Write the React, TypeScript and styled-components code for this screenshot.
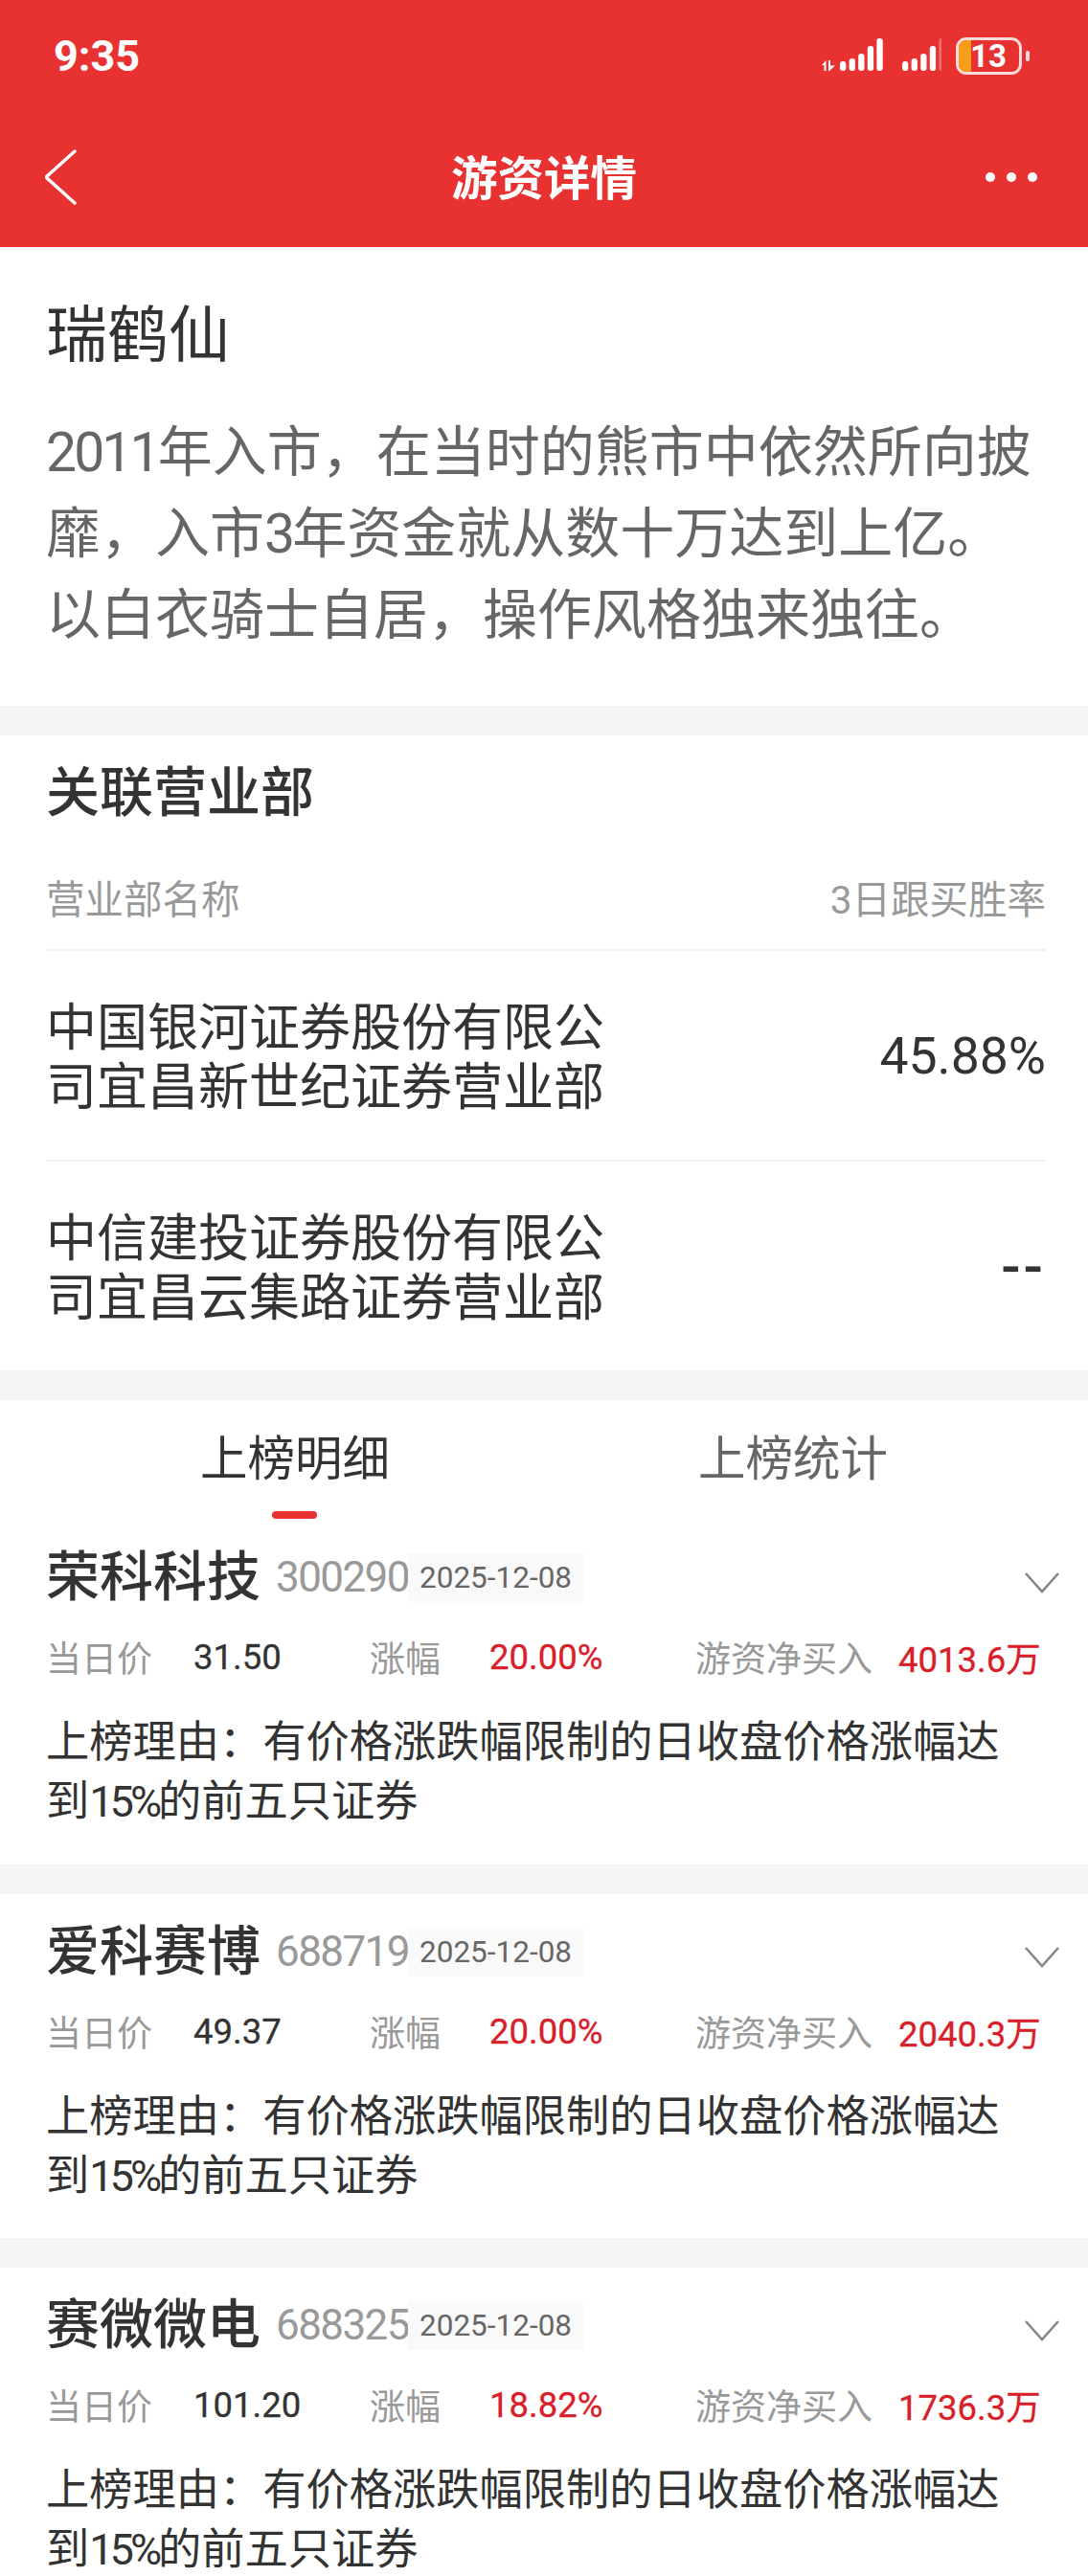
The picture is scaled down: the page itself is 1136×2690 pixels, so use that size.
import React from "react";
import styled, { createGlobalStyle } from "styled-components";

const GlobalStyle = createGlobalStyle`
  html, body {
    margin: 0;
    padding: 0;
    background: #f5f5f5;
    font-family: "Roboto", "Noto Sans CJK SC", sans-serif;
  }
  * {
    box-sizing: border-box;
  }
`;

const Page = styled.div`
  width: 1136px;
  height: 2690px;
  overflow: hidden;
  background: #f5f5f5;
  color: #333;
`;

const Header = styled.header`
  height: 258px;
  background: #e83232;
  color: #fff;
`;

const StatusBar = styled.div`
  height: 122px;
  padding: 34px 61px 0 56px;
  display: flex;
  justify-content: space-between;
  align-items: flex-start;
`;

const Clock = styled.span`
  font-size: 45px;
  line-height: 50px;
  font-weight: 700;
`;

const StatusIcons = styled.div`
  display: flex;
  align-items: center;
  height: 48px;
`;

const Battery = styled.div`
  position: relative;
  width: 69px;
  height: 39px;
  margin-left: 15px;
  border: 3px solid #fbdcdc;
  border-radius: 11px;
  overflow: hidden;
  display: flex;
  align-items: center;
  justify-content: flex-end;
  padding-right: 13px;
  font-size: 33px;
  font-weight: 700;
  line-height: 1;
  &::before {
    content: "";
    position: absolute;
    left: 0;
    top: 0;
    bottom: 0;
    width: 13px;
    background: #f89c1c;
  }
`;

const BatteryCap = styled.i`
  width: 4px;
  height: 11px;
  margin-left: 4px;
  background: #fbdcdc;
  border-radius: 2px;
`;

const NavBar = styled.nav`
  height: 136px;
  padding: 0 50px;
  display: grid;
  grid-template-columns: 1fr auto 1fr;
  align-items: start;
`;

const NavTitle = styled.h1`
  margin: 34px 0 0;
  font-size: 48.5px;
  line-height: 64px;
  font-weight: 700;
`;

const BackIcon = styled.svg`
  width: 33px;
  height: 58px;
  margin: 34px 0 0 -3px;
`;

const MoreIcon = styled.svg`
  justify-self: end;
  width: 54px;
  height: 12px;
  margin: 57px 3px 0 0;
`;

const Section = styled.section<{ $gap?: number }>`
  background: #fff;
  margin-bottom: ${(p) => p.$gap ?? 31}px;
`;

const Intro = styled(Section)`
  height: 479px;
  padding: 50px 48px 0;
`;

const PersonName = styled.h2`
  margin: 0 0 36px;
  font-size: 64px;
  line-height: 86px;
  font-weight: 400;
`;

const PersonBio = styled.p`
  margin: 0;
  font-size: 57px;
  line-height: 85px;
  color: #666;
  white-space: nowrap;
`;

// latin digits sit tighter than the CJK text around them
const Digits = styled.span<{ $tight: number }>`
  letter-spacing: ${(p) => p.$tight}em;
`;

const Branches = styled(Section)`
  height: 663px;
  padding: 22px 44px 0 48px;
`;

const SectionTitle = styled.h2`
  margin: 0;
  font-size: 56px;
  line-height: 76px;
  font-weight: 500;
`;

const BranchHead = styled.div`
  height: 127px;
  padding-top: 46px;
  display: flex;
  justify-content: space-between;
  font-size: 40.5px;
  line-height: 56px;
  color: #999;
  border-bottom: 2px solid #f0f0f0;
`;

const BranchRow = styled.div<{ $last?: boolean }>`
  height: ${(p) => (p.$last ? 218 : 220)}px;
  display: flex;
  justify-content: space-between;
  align-items: center;
  border-bottom: ${(p) => (p.$last ? "none" : "2px solid #f0f0f0")};
`;

const BranchName = styled.div`
  padding-top: 6px;
  font-size: 53px;
  line-height: 62px;
  white-space: pre-line;
`;

const WinRate = styled.div<{ $empty?: boolean }>`
  font-size: ${(p) => (p.$empty ? 60 : 53.5)}px;
  font-weight: ${(p) => (p.$empty ? 500 : 400)};
  letter-spacing: ${(p) => (p.$empty ? 3 : 0)}px;
`;

const Tabs = styled.div`
  display: flex;
  height: 159px;
  padding: 0 48px;
`;

const Tab = styled.div<{ $active?: boolean }>`
  position: relative;
  flex: 1;
  text-align: center;
  padding-top: 28px;
  font-size: 49.5px;
  line-height: 68px;
  color: ${(p) => (p.$active ? "#333" : "#666")};
  &::after {
    content: "";
    display: ${(p) => (p.$active ? "block" : "none")};
    position: absolute;
    left: 50%;
    top: 116px;
    width: 47px;
    height: 8px;
    margin-left: -24px;
    border-radius: 4px;
    background: #e83232;
  }
`;

const StockCard = styled.div`
  padding: 0 48px;
`;

const StockHead = styled.div`
  display: flex;
  align-items: center;
  height: 52px;
  position: relative;
`;

const StockName = styled.span`
  font-size: 56px;
  line-height: 52px;
  font-weight: 500;
  margin-right: 16px;
`;

const StockCode = styled.span`
  width: 138px;
  font-size: 44px;
  letter-spacing: -1.6px;
  color: #999;
`;

const DateTag = styled.span`
  height: 51px;
  padding: 0 12px;
  display: flex;
  align-items: center;
  background: #f9f9f9;
  color: #666;
  font-size: 31.5px;
`;

const Chevron = styled.svg`
  position: absolute;
  right: -19px;
  top: 20px;
  width: 38px;
  height: 23px;
`;

const StatRow = styled.div`
  display: grid;
  grid-template-columns: 338px 340px 1fr;
  margin-top: 30px;
  height: 44px;
  align-items: center;
`;

const Stat = styled.div`
  display: flex;
  align-items: center;
  white-space: nowrap;
`;

const StatLabel = styled.span<{ $width: number }>`
  width: ${(p) => p.$width}px;
  font-size: 37px;
  color: #999;
`;

const StatValue = styled.span<{ $up?: boolean }>`
  font-size: 36.5px;
  font-weight: 400;
  color: ${(p) => (p.$up ? "#d8202a" : "#333")};
  -webkit-text-stroke: 0.3px currentColor;
`;

const Reason = styled.p`
  margin: 42px 0 0;
  font-size: 45.25px;
  line-height: 62px;
  color: #333;
`;

const Stocks = styled(Section)<{ $first?: boolean }>`
  padding-top: ${(p) => (p.$first ? 0 : 34)}px;
  height: ${(p) => (p.$first ? 485 : 359)}px;
`;

const stocks = [
  { name: "荣科科技", code: "300290", price: "31.50", change: "20.00%", net: "4013.6万" },
  { name: "爱科赛博", code: "688719", price: "49.37", change: "20.00%", net: "2040.3万" },
  { name: "赛微微电", code: "688325", price: "101.20", change: "18.82%", net: "1736.3万" },
];

const signalBars = (x: number, lastOpacity: number) =>
  [10, 13, 18, 26, 34].map((h, i) => (
    <rect
      key={i}
      x={x + i * 9.6}
      y={34 - h}
      width={6.3}
      height={h}
      rx={3}
      fill="#fff"
      opacity={i === 4 ? lastOpacity : 1}
    />
  ));

const App = () => {
  return (
    <Page>
      <GlobalStyle />
      <Header>
        <StatusBar>
          <Clock>9:35</Clock>
          <StatusIcons>
            <svg width="128" height="36" viewBox="0 0 128 36">
              {/* data arrows */}
              <path d="M3 28L7.5 23V34H5.5V28ZM10 23H12V28.5H17L11 34H10Z" fill="#fff" />
              {signalBars(22, 1)}
              {signalBars(87, 0.3)}
            </svg>
            <Battery>13</Battery>
            <BatteryCap />
          </StatusIcons>
        </StatusBar>
        <NavBar>
          <BackIcon viewBox="0 0 33 58" fill="none" stroke="#fff" strokeWidth="3.4" strokeLinecap="round" strokeLinejoin="round">
            <path d="M31 2 L1 29 L31 56" />
          </BackIcon>
          <NavTitle>游资详情</NavTitle>
          <MoreIcon viewBox="0 0 54 12" fill="#fff">
            <circle cx="5" cy="6" r="5" />
            <circle cx="27" cy="6" r="5" />
            <circle cx="49" cy="6" r="5" />
          </MoreIcon>
        </NavBar>
      </Header>

      <Intro>
        <PersonName>瑞鹤仙</PersonName>
        <PersonBio>
          <Digits $tight={-0.05}>2011</Digits>年入市，在当时的熊市中依然所向披
          <br />
          靡，入市<Digits $tight={-0.05}>3</Digits>年资金就从数十万达到上亿。
          <br />
          以白衣骑士自居，操作风格独来独往。
        </PersonBio>
      </Intro>

      <Branches>
        <SectionTitle>关联营业部</SectionTitle>
        <BranchHead>
          <span>营业部名称</span>
          <span>3日跟买胜率</span>
        </BranchHead>
        <BranchRow>
          <BranchName>{"中国银河证券股份有限公\n司宜昌新世纪证券营业部"}</BranchName>
          <WinRate>45.88%</WinRate>
        </BranchRow>
        <BranchRow $last>
          <BranchName>{"中信建投证券股份有限公\n司宜昌云集路证券营业部"}</BranchName>
          <WinRate $empty>--</WinRate>
        </BranchRow>
      </Branches>

      {stocks.map((s, i) => (
        <Stocks key={s.code} $first={i === 0}>
          {i === 0 && (
            <Tabs>
              <Tab $active>上榜明细</Tab>
              <Tab>上榜统计</Tab>
            </Tabs>
          )}
          <StockCard>
            <StockHead>
              <StockName>{s.name}</StockName>
              <StockCode>{s.code}</StockCode>
              <DateTag>2025-12-08</DateTag>
              <Chevron viewBox="0 0 38 23" fill="none" stroke="#888" strokeWidth="2.6">
                <path d="M2 2 L19 21 L36 2" />
              </Chevron>
            </StockHead>
            <StatRow>
              <Stat>
                <StatLabel $width={154}>当日价</StatLabel>
                <StatValue>{s.price}</StatValue>
              </Stat>
              <Stat>
                <StatLabel $width={125}>涨幅</StatLabel>
                <StatValue $up>{s.change}</StatValue>
              </Stat>
              <Stat>
                <StatLabel $width={212}>游资净买入</StatLabel>
                <StatValue $up>{s.net}</StatValue>
              </Stat>
            </StatRow>
            <Reason>
              上榜理由：有价格涨跌幅限制的日收盘价格涨幅达
              <br />
              到<Digits $tight={-0.09}>15%</Digits>的前五只证券
            </Reason>
          </StockCard>
        </Stocks>
      ))}
    </Page>
  );
};

export default App;
